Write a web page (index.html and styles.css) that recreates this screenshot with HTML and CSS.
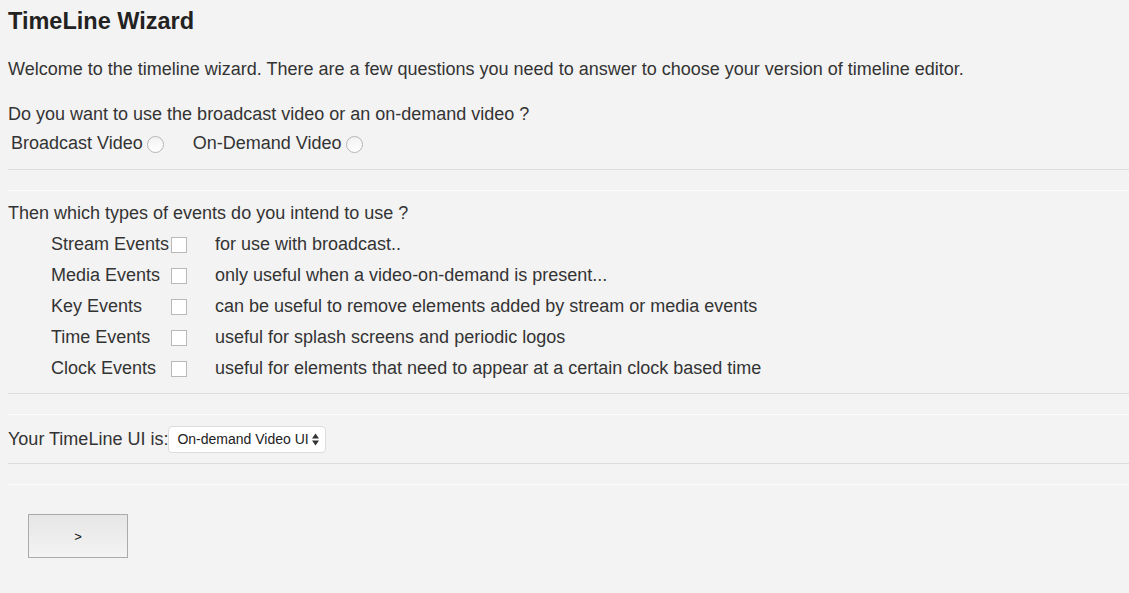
FILE: index.html
```html
<!DOCTYPE html>
<html>
<head>
<meta charset="utf-8">
<link rel="stylesheet" href="styles.css">
</head>
<body>
<h1 class="title">TimeLine Wizard</h1>
<p class="text welcome">Welcome to the timeline wizard. There are a few questions you need to answer to choose your version of timeline editor.</p>
<p class="text question">Do you want to use the broadcast video or an on-demand video ?</p>
<div class="radios">
  <label class="radio-label">Broadcast Video<input type="radio" name="video" class="radio"></label>
  <label class="radio-label">On-Demand Video<input type="radio" name="video" class="radio"></label>
</div>
<div class="sep sep1"></div>
<p class="text question2">Then which types of events do you intend to use ?</p>
<div class="events">
  <span class="ev-name">Stream Events</span><input type="checkbox" class="check"><span class="ev-desc">for use with broadcast..</span>
  <span class="ev-name">Media Events</span><input type="checkbox" class="check"><span class="ev-desc">only useful when a video-on-demand is present...</span>
  <span class="ev-name">Key Events</span><input type="checkbox" class="check"><span class="ev-desc">can be useful to remove elements added by stream or media events</span>
  <span class="ev-name">Time Events</span><input type="checkbox" class="check"><span class="ev-desc">useful for splash screens and periodic logos</span>
  <span class="ev-name">Clock Events</span><input type="checkbox" class="check"><span class="ev-desc">useful for elements that need to appear at a certain clock based time</span>
</div>
<div class="sep sep2"></div>
<div class="ui-row">
  <span class="text">Your TimeLine UI is:</span>
  <div class="select">
    <span class="select-text">On-demand Video UI</span>
    <svg class="arrows" width="7" height="13" viewBox="0 0 7 13"><path d="M3.5 0.5 L7 5.5 L0 5.5 Z M0 7.5 L7 7.5 L3.5 12.5 Z" fill="#333"/></svg>
  </div>
</div>
<div class="sep sep3"></div>
<button class="next">&gt;</button>
</body>
</html>
```
FILE: styles.css
```css
html, body {
  margin: 0;
  padding: 0;
  background: #f3f3f3;
}
body {
  padding: 0 0 0 8px;
  font-family: "Liberation Sans", Arial, sans-serif;
  color: #333;
}
.title {
  margin: 6px 0 0 0;
  font-size: 23.5px;
  line-height: 30px;
  font-weight: bold;
  color: #222;
}
.text {
  font-size: 18px;
  line-height: 24px;
  margin: 0;
}
.welcome {
  margin-top: 21px;
}
.question {
  margin-top: 21px;
}
.radios {
  display: flex;
  align-items: center;
  height: 30px;
  margin-top: 2px;
  padding-left: 3px;
  gap: 29px;
  font-size: 18px;
}
.radio-label {
  display: flex;
  align-items: center;
}
.radio {
  appearance: none;
  -webkit-appearance: none;
  width: 17px;
  height: 17px;
  margin: 2px 0 0 4px;
  border: 1px solid #b5b5b5;
  border-radius: 50%;
  background: linear-gradient(#f2f2f2, #ffffff);
  box-sizing: border-box;
}
.sep {
  height: 20px;
  border-top: 1px solid #dcdcdc;
  border-bottom: 1px solid #fcfcfc;
}
.sep1 {
  margin-top: 11px;
}
.question2 {
  margin-top: 10px;
}
.events {
  display: grid;
  grid-template-columns: 120px 44px auto;
  grid-auto-rows: 31px;
  align-items: center;
  padding-left: 43px;
  font-size: 18px;
  margin-top: 4px;
}
.check {
  appearance: none;
  -webkit-appearance: none;
  width: 16px;
  height: 16px;
  margin: 0;
  border: 1px solid #b8b8b8;
  background: #fff;
  box-sizing: border-box;
}
.sep2 {
  margin-top: 9px;
}
.ui-row {
  display: flex;
  align-items: center;
  gap: 0;
  margin-top: 10px;
  height: 28px;
}
.ui-row .text {
  line-height: 28px;
}
.select {
  display: flex;
  align-items: center;
  justify-content: space-between;
  width: 158px;
  height: 27px;
  box-sizing: border-box;
  padding: 0 6px 0 8px;
  background: #fff;
  border: 1px solid #dcdcdc;
  border-radius: 4px;
  font-size: 14px;
  color: #222;
}
.sep3 {
  margin-top: 10px;
}
.next {
  display: block;
  margin: 29px 0 0 20px;
  width: 100px;
  height: 44px;
  border: 1px solid #aaa;
  background: linear-gradient(#e6e6e6, #f3f3f3);
  font-family: "Liberation Sans", Arial, sans-serif;
  font-size: 13px;
  color: #111;
  padding: 0;
}
```
